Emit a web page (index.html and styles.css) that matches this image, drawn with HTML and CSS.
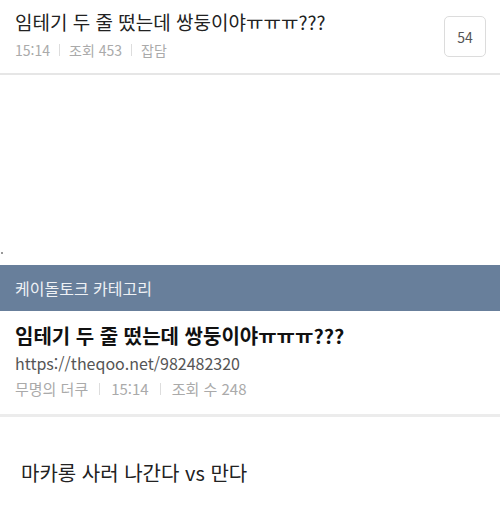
FILE: index.html
```html
<!DOCTYPE html>
<html lang="ko">
<head>
  <meta charset="UTF-8" />
  <title>임테기 두 줄 떴는데 쌍둥이야</title>
  <link rel="stylesheet" href="styles.css">
</head>
<body>

<div class="post-head">
  <div class="post-info">
    <h1 class="post-title">임테기 두 줄 떴는데 쌍둥이야ㅠㅠㅠ???</h1>
    <div class="post-meta">
      <span>15:14</span><span class="sep"></span><span>조회 453</span><span class="sep"></span><span>잡담</span>
    </div>
  </div>
  <div class="comment-count">54</div>
</div>

<div class="blank">
  <span class="speck"></span>
</div>

<div class="category">케이돌토크 카테고리</div>

<div class="card">
  <div class="card-title">임테기 두 줄 떴는데 쌍둥이야ㅠㅠㅠ???</div>
  <div class="card-url">https://theqoo.net/982482320</div>
  <div class="card-meta">
    <span>무명의 더쿠</span><span class="sep"></span><span>15:14</span><span class="sep"></span><span>조회 수 248</span>
  </div>
</div>

<div class="next">마카롱 사러 나간다 vs 만다</div>

</body>
</html>
```

FILE: styles.css
```css
* { margin: 0; padding: 0; box-sizing: border-box; }

body {
  font-family: "Noto Sans CJK KR", "Noto Sans", sans-serif;
  background: #fff;
  color: #222;
}

.post-head {
  display: flex;
  justify-content: space-between;
  align-items: flex-start;
  height: 75px;
  padding: 8px 14px 0 15px;
  border-bottom: 2px solid #e6e6e6;
}

.post-title {
  font-size: 19px;
  font-weight: 400;
  line-height: 28px;
  color: #222;
}

.post-meta,
.card-meta {
  display: flex;
  align-items: center;
  color: #aaa;
  font-size: 14px;
  line-height: 20px;
  margin-top: 4px;
}

.sep {
  display: inline-block;
  width: 1px;
  height: 12px;
  background: #ddd;
  margin: 0 9px;
}

.comment-count {
  width: 42px;
  height: 41px;
  margin-top: 8px;
  border: 1px solid #dcdcdc;
  border-radius: 5px;
  display: flex;
  align-items: center;
  justify-content: center;
  font-size: 14px;
  color: #555;
}

.blank {
  height: 190px;
  padding-top: 177px;
}

.speck {
  display: block;
  width: 2px;
  height: 2px;
  margin-left: 1px;
  background: #999;
}

.category {
  height: 46px;
  background: #687f9b;
  color: #eef1f5;
  font-size: 16px;
  line-height: 46px;
  padding-left: 15px;
}

.card {
  padding: 11px 15px 0;
  height: 106px;
  border-bottom: 3px solid #ececec;
}

.card-title {
  font-size: 20px;
  font-weight: 700;
  line-height: 28px;
  color: #111;
}

.card-url {
  font-size: 16px;
  line-height: 22px;
  color: #555;
  margin-top: 2px;
}

.card .card-meta {
  font-size: 15px;
  margin-top: 5px;
}

.card .sep {
  margin: 0 11px;
}

.next {
  padding: 41px 21px 0;
  font-size: 20px;
  color: #222;
}
```
